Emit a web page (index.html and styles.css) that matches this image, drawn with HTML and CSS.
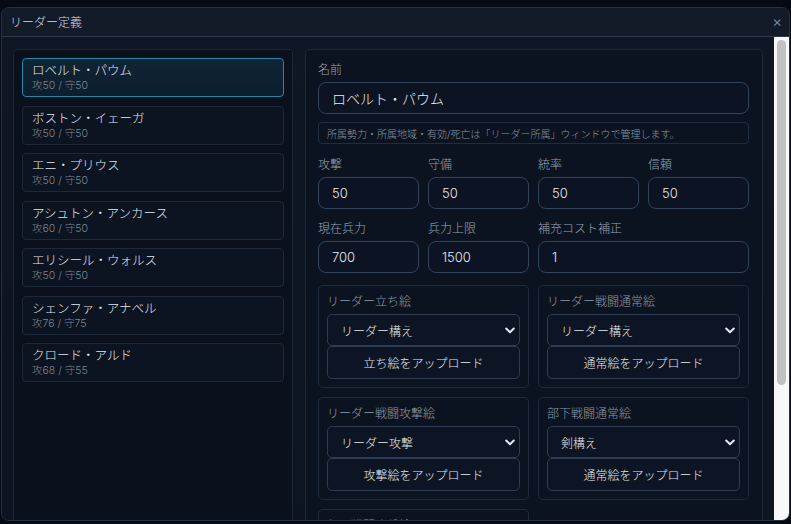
FILE: index.html
```html
<!DOCTYPE html>
<html lang="ja">
<head>
<meta charset="utf-8">
<title>リーダー定義</title>
<link rel="stylesheet" href="styles.css">
</head>
<body>
<div class="dialog">
  <div class="titlebar">
    <span class="title">リーダー定義</span>
    <span class="close">×</span>
  </div>
  <div class="body">
    <div class="content">
      <div class="list-panel">
        <div class="item selected"><div class="name">ロベルト・パウム</div><div class="sub">攻50 / 守50</div></div>
        <div class="item"><div class="name">ボストン・イェーガ</div><div class="sub">攻50 / 守50</div></div>
        <div class="item"><div class="name">エニ・プリウス</div><div class="sub">攻50 / 守50</div></div>
        <div class="item"><div class="name">アシュトン・アンカース</div><div class="sub">攻60 / 守50</div></div>
        <div class="item"><div class="name">エリシール・ウォルス</div><div class="sub">攻50 / 守50</div></div>
        <div class="item"><div class="name">シェンファ・アナベル</div><div class="sub">攻76 / 守75</div></div>
        <div class="item"><div class="name">クロード・アルド</div><div class="sub">攻68 / 守55</div></div>
      </div>
      <div class="form-panel">
        <div class="label">名前</div>
        <div class="input big">ロベルト・パウム</div>
        <div class="note">所属勢力・所属地域・有効/死亡は「リーダー所属」ウィンドウで管理します。</div>
        <div class="grid4 first">
          <div class="field"><div class="label">攻撃</div><div class="input">50</div></div>
          <div class="field"><div class="label">守備</div><div class="input">50</div></div>
          <div class="field"><div class="label">統率</div><div class="input">50</div></div>
          <div class="field"><div class="label">信頼</div><div class="input">50</div></div>
        </div>
        <div class="grid4 second">
          <div class="field"><div class="label">現在兵力</div><div class="input">700</div></div>
          <div class="field"><div class="label">兵力上限</div><div class="input">1500</div></div>
          <div class="field span2"><div class="label">補充コスト補正</div><div class="input">1</div></div>
        </div>
        <div class="images">
          <div class="imgbox">
            <div class="label">リーダー立ち絵</div>
            <div class="select"><span>リーダー構え</span><svg width="10" height="7" viewBox="0 0 10 7"><path d="M1.2 1.5 L5 5.3 L8.8 1.5" fill="none" stroke="#e6eaef" stroke-width="2" stroke-linecap="round" stroke-linejoin="round"/></svg></div>
            <div class="button">立ち絵をアップロード</div>
          </div>
          <div class="imgbox">
            <div class="label">リーダー戦闘通常絵</div>
            <div class="select"><span>リーダー構え</span><svg width="10" height="7" viewBox="0 0 10 7"><path d="M1.2 1.5 L5 5.3 L8.8 1.5" fill="none" stroke="#e6eaef" stroke-width="2" stroke-linecap="round" stroke-linejoin="round"/></svg></div>
            <div class="button">通常絵をアップロード</div>
          </div>
          <div class="imgbox">
            <div class="label">リーダー戦闘攻撃絵</div>
            <div class="select"><span>リーダー攻撃</span><svg width="10" height="7" viewBox="0 0 10 7"><path d="M1.2 1.5 L5 5.3 L8.8 1.5" fill="none" stroke="#e6eaef" stroke-width="2" stroke-linecap="round" stroke-linejoin="round"/></svg></div>
            <div class="button">攻撃絵をアップロード</div>
          </div>
          <div class="imgbox">
            <div class="label">部下戦闘通常絵</div>
            <div class="select"><span>剣構え</span><svg width="10" height="7" viewBox="0 0 10 7"><path d="M1.2 1.5 L5 5.3 L8.8 1.5" fill="none" stroke="#e6eaef" stroke-width="2" stroke-linecap="round" stroke-linejoin="round"/></svg></div>
            <div class="button">通常絵をアップロード</div>
          </div>
          <div class="imgbox">
            <div class="label">部下戦闘攻撃絵</div>
            <div class="select"><span>剣攻撃</span><svg width="10" height="7" viewBox="0 0 10 7"><path d="M1.2 1.5 L5 5.3 L8.8 1.5" fill="none" stroke="#e6eaef" stroke-width="2" stroke-linecap="round" stroke-linejoin="round"/></svg></div>
            <div class="button">攻撃絵をアップロード</div>
          </div>
        </div>
      </div>
    </div>
    <div class="scrollbar"><div class="thumb"></div></div>
  </div>
</div>
</body>
</html>
```
FILE: styles.css
```css
* { box-sizing: border-box; }
html, body { margin: 0; padding: 0; }
body {
  background: #050a14;
  font-family: Inter, "Noto Sans CJK JP", sans-serif;
  font-weight: 300;
  color: #e6eaef;
  padding: 7px 1px 0 1px;
  height: 524px;
  overflow: hidden;
}
.dialog {
  width: 789px;
  height: 514px;
  border: 1px solid #243245;
  border-radius: 8px;
  background: #0f1624;
  display: flex;
  flex-direction: column;
  overflow: hidden;
}
.titlebar {
  height: 29px;
  flex: none;
  background: #131b29;
  border-bottom: 1px solid #2a3b50;
  display: flex;
  align-items: center;
  justify-content: space-between;
  padding: 0 7px 2px 8px;
}
.title { font-size: 12px; color: #d3d9e0; }
.close { font-size: 15px; color: #8c97a5; line-height: 1; }
.body {
  flex: 1;
  min-height: 0;
  display: flex;
  background: linear-gradient(180deg, #0f1624 0%, #0d1421 100%);
}
.content {
  flex: 1;
  min-width: 0;
  overflow: hidden;
  display: grid;
  grid-template-columns: 280px 1fr;
  gap: 12px;
  padding: 12px 11px 0 11px;
}
.scrollbar {
  flex: none;
  width: 15px;
  background: #f8f8f8;
  padding: 3px 3px 0 3px;
}
.thumb {
  height: 345px;
  border-radius: 5px;
  background: #c1c1c1;
}
.list-panel {
  border: 1px solid #1c2737;
  border-radius: 4px;
  background: #0a101c;
  padding: 8px;
  display: flex;
  flex-direction: column;
  gap: 8.5px;
  height: 700px;
}
.item {
  height: 39px;
  flex: none;
  border: 1px solid #1d2939;
  border-radius: 4px;
  background: #0c1321;
  padding: 4px 9px;
}
.item.selected {
  border-color: #1e8ca8;
  background: linear-gradient(180deg, #0f2435 0%, #0d1e2e 100%);
}
.name { font-size: 12.5px; line-height: 16px; color: #e3e8ee; white-space: nowrap; }
.sub { font-size: 10.5px; line-height: 14px; color: #7b8796; }
.form-panel {
  border: 1px solid #1c2737;
  border-radius: 4px;
  background: #0c1320;
  padding: 12px 13px 12px 12px;
  height: 700px;
}
.label { font-size: 12px; line-height: 16px; color: #97a2b0; white-space: nowrap; }
.input {
  margin-top: 4px;
  height: 32px;
  border: 1px solid #32445a;
  border-radius: 8px;
  background: #0c1322;
  padding: 0 13px;
  display: flex;
  align-items: center;
  font-size: 13px;
  color: #e8ecf1;
}
.input.big { height: 32px; font-size: 14px; }
.note {
  margin-top: 8px;
  height: 22px;
  border: 1px solid #1f2d40;
  border-radius: 4px;
  padding: 0 8px;
  display: flex;
  align-items: center;
  font-size: 10px;
  color: #8995a5;
  white-space: nowrap;
}
.grid4 {
  display: grid;
  grid-template-columns: repeat(4, 1fr);
  gap: 9px;
}
.grid4.first { margin-top: 13px; }
.grid4.second { margin-top: 12px; }
.span2 { grid-column: span 2; }
.images {
  margin-top: 12px;
  display: grid;
  grid-template-columns: 1fr 1fr;
  gap: 9px;
}
.imgbox {
  border: 1px solid #1e2b3d;
  border-radius: 5px;
  padding: 8px;
  display: flex;
  flex-direction: column;
}
.imgbox .label { font-size: 12px; color: #8f9aa8; margin-bottom: 4px; }
.select {
  height: 32px;
  border: 1px solid #2c3d53;
  border-radius: 5px;
  background: #0d1524;
  padding: 0 4px 0 13px;
  display: flex;
  align-items: center;
  justify-content: space-between;
  font-size: 12px;
  color: #e6eaef;
}
.button {
  height: 33px;
  border: 1px solid #2c3d53;
  border-radius: 5px;
  background: #0d1524;
  display: flex;
  align-items: center;
  justify-content: center;
  font-size: 12px;
  color: #e6eaef;
}
```
